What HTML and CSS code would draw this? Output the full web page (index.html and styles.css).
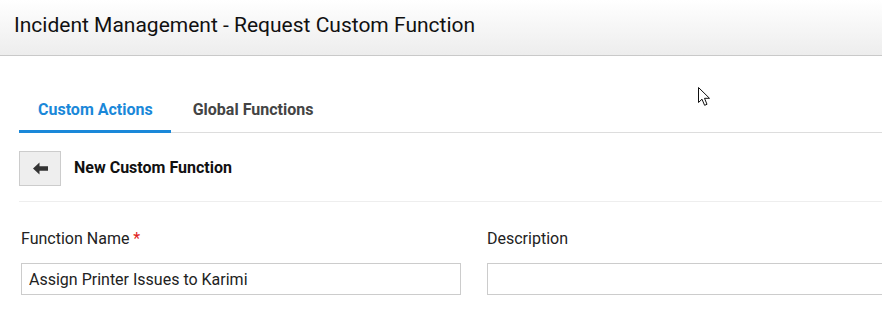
FILE: index.html
```html
<!DOCTYPE html>
<html lang="en">
<head>
    <meta charset="UTF-8">
    <meta name="viewport" content="width=device-width, initial-scale=1.0">
    <title>Incident Management - Request Custom Function</title>
    <link rel="stylesheet" href="styles.css">
</head>
<body>
    <div class="page-header">
        <h1 class="page-title">Incident Management - Request Custom Function</h1>
    </div>

    <div class="content">
        <div class="tabs">
            <div class="tab active">Custom Actions</div>
            <div class="tab">Global Functions</div>
        </div>

        <div class="toolbar">
            <button class="back-btn" type="button" aria-label="Back">
                <svg width="15" height="13" viewBox="0 0 15 13">
                    <path d="M0 6.5 L6.5 0.5 L6.5 4.3 L15 4.3 L15 8.7 L6.5 8.7 L6.5 12.5 Z" fill="#333"/>
                </svg>
            </button>
            <span class="toolbar-title">New Custom Function</span>
        </div>

        <div class="form-row">
            <div class="field">
                <label class="field-label">Function Name <span class="required">*</span></label>
                <input class="field-input" type="text" value="Assign Printer Issues to Karimi">
            </div>
            <div class="field">
                <label class="field-label">Description</label>
                <input class="field-input" type="text">
            </div>
        </div>
    </div>

    <!-- mouse pointer from the screenshot -->
    <svg class="pointer" width="13" height="20" viewBox="0 0 13 20">
        <path d="M0.5 0.5 L0.5 15.5 L4 12.2 L6.6 18.3 L9 17.3 L6.5 11.3 L11.5 11.3 Z" fill="#fff" stroke="#111" stroke-width="1"/>
    </svg>
</body>
</html>
```

FILE: styles.css
```css
body {
    font-family: 'Roboto', 'Liberation Sans', sans-serif;
    margin: 0;
    padding: 0;
    background: #ffffff;
    color: #222222;
    overflow: hidden;
    position: relative;
}
.page-header {
    height: 55px;
    background: linear-gradient(to bottom, #ffffff, #ededed);
    border-bottom: 1px solid #c9c9c9;
    display: flex;
    align-items: center;
    padding-left: 14px;
}
.page-title {
    margin: 0;
    font-size: 21px;
    font-weight: normal;
    color: #111111;
    line-height: 24px;
    padding-bottom: 6px;
}
.content {
    padding-left: 19px;
}
.tabs {
    display: flex;
    gap: 3px;
    margin-top: 32px;
    border-bottom: 1px solid #dddddd;
}
.tab {
    padding: 12px 18px 10px 19px;
    font-size: 16px;
    font-weight: bold;
    line-height: 20px;
    color: #444444;
    border-bottom: 3px solid transparent;
    margin-bottom: -1px;
    cursor: pointer;
}
.tab.active {
    color: #1a88d9;
    border-bottom-color: #1a88d9;
}
.toolbar {
    display: flex;
    align-items: center;
    gap: 13px;
    margin-top: 18px;
    padding-bottom: 15px;
    border-bottom: 1px solid #eeeeee;
}
.back-btn {
    width: 42px;
    height: 35px;
    background: #eeeeee;
    border: 1px solid #cccccc;
    display: flex;
    align-items: center;
    justify-content: center;
    padding: 0;
    cursor: pointer;
}
.toolbar-title {
    font-size: 16px;
    font-weight: bold;
    color: #111111;
    padding-bottom: 2px;
}
.form-row {
    display: grid;
    grid-template-columns: 440px 440px;
    gap: 26px;
    padding-left: 2px;
    margin-top: 28px;
}
.field {
    display: flex;
    flex-direction: column;
    gap: 15px;
}
.field-label {
    font-size: 16px;
    line-height: 18px;
    color: #222222;
}
.required {
    color: #e02020;
}
.field-input {
    height: 32px;
    box-sizing: border-box;
    border: 1px solid #cccccc;
    padding: 0 7px;
    font-family: 'Roboto', 'Liberation Sans', sans-serif;
    font-size: 16px;
    color: #222222;
    outline: none;
}
.pointer {
    position: absolute;
    left: 698px;
    top: 87px;
}
```
